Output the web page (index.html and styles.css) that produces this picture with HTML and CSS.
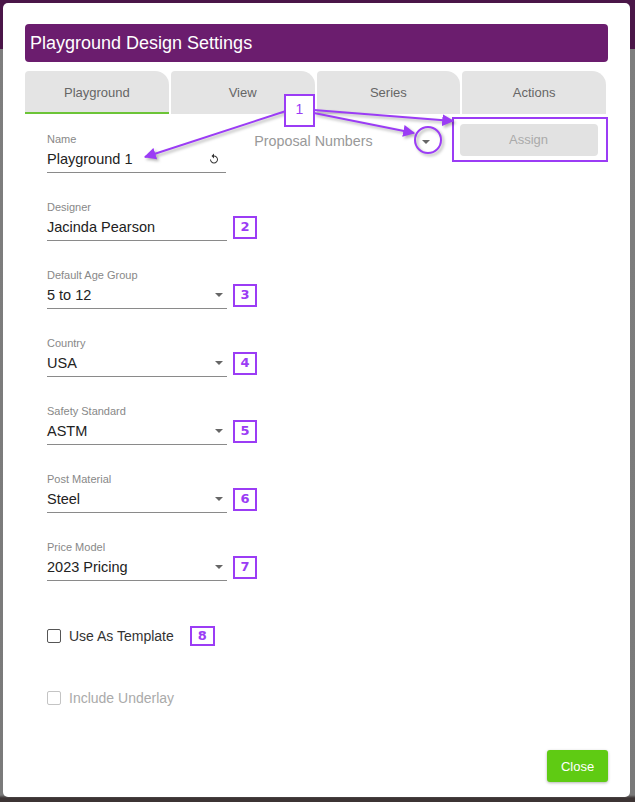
FILE: index.html
```html
<!DOCTYPE html>
<html>
<head>
<meta charset="utf-8">
<link rel="stylesheet" href="styles.css">
</head>
<body>
<div class="dialog">
  <div class="title">Playground Design Settings</div>
  <div class="tabs">
    <div class="tab active">Playground</div>
    <div class="tab">View</div>
    <div class="tab">Series</div>
    <div class="tab">Actions</div>
  </div>
  <div class="content">
    <div class="top-row">
      <div class="field">
        <div class="label">Name</div>
        <div class="input"><span>Playground 1</span>
          <svg class="reset" viewBox="0 0 24 24" width="12" height="12"><path d="M12 5V1L7 6l5 5V7c3.31 0 6 2.69 6 6s-2.69 6-6 6-6-2.69-6-6H4c0 4.42 3.58 8 8 8s8-3.58 8-8-3.58-8-8-8z" fill="#333"/></svg>
        </div>
      </div>
      <div class="proposal"><span>Proposal Numbers</span><i class="caret"></i></div>
      <div class="assign-box"><div class="assign">Assign</div></div>
    </div>
    <div class="row">
      <div class="field">
        <div class="label">Designer</div>
        <div class="input"><span>Jacinda Pearson</span></div>
      </div>
      <div class="num">2</div>
    </div>
    <div class="row">
      <div class="field">
        <div class="label">Default Age Group</div>
        <div class="input"><span>5 to 12</span><i class="caret"></i></div>
      </div>
      <div class="num">3</div>
    </div>
    <div class="row">
      <div class="field">
        <div class="label">Country</div>
        <div class="input"><span>USA</span><i class="caret"></i></div>
      </div>
      <div class="num">4</div>
    </div>
    <div class="row">
      <div class="field">
        <div class="label">Safety Standard</div>
        <div class="input"><span>ASTM</span><i class="caret"></i></div>
      </div>
      <div class="num">5</div>
    </div>
    <div class="row">
      <div class="field">
        <div class="label">Post Material</div>
        <div class="input"><span>Steel</span><i class="caret"></i></div>
      </div>
      <div class="num">6</div>
    </div>
    <div class="row">
      <div class="field">
        <div class="label">Price Model</div>
        <div class="input"><span>2023 Pricing</span><i class="caret"></i></div>
      </div>
      <div class="num">7</div>
    </div>
    <div class="checks">
      <div class="check-row">
        <span class="box"></span><span class="check-label">Use As Template</span>
        <div class="num num-check">8</div>
      </div>
      <div class="check-row disabled">
        <span class="box"></span><span class="check-label">Include Underlay</span>
      </div>
    </div>
  </div>
  <div class="footer"><button class="close">Close</button></div>
</div>
<svg class="arrows" width="635" height="802" viewBox="0 0 635 802">
  <defs>
    <marker id="ah" viewBox="0 0 10 10" refX="9" refY="5" markerWidth="6" markerHeight="6" markerUnits="strokeWidth" orient="auto">
      <path d="M0 0 L10 5 L0 10 z" fill="#9b3cf5"/>
    </marker>
  </defs>
  <line x1="286" y1="111" x2="145" y2="157" stroke="#9b3cf5" stroke-width="2" marker-end="url(#ah)"/>
  <line x1="314" y1="113" x2="414" y2="133" stroke="#9b3cf5" stroke-width="2" marker-end="url(#ah)"/>
  <line x1="314" y1="110" x2="453" y2="121" stroke="#9b3cf5" stroke-width="2" marker-end="url(#ah)"/>
  <circle cx="428" cy="140" r="13" fill="none" stroke="#9b3cf5" stroke-width="2"/>
</svg>
<div class="num num-one">1</div>
</body>
</html>
```
FILE: styles.css
```css
html, body {
  margin: 0;
  padding: 0;
}
body {
  width: 635px;
  height: 802px;
  overflow: hidden;
  position: relative;
  font-family: "Liberation Sans", Arial, sans-serif;
  background: linear-gradient(to bottom, #4a1648 0, #4a1648 49px, #7e7e7e 49px, #7a7a7a 795px, #3c3434 798px, #3c3434 802px);
}
.dialog {
  margin: 3px 0 0 3px;
  width: 627px;
  height: 794px;
  box-sizing: border-box;
  background: #fff;
  border-radius: 5px;
  padding: 21px 22px 15px 22px;
  display: flex;
  flex-direction: column;
}
.title {
  height: 38px;
  width: 583px;
  box-sizing: border-box;
  background: #6b1d6e;
  border-radius: 4px;
  color: #fff;
  font-size: 18px;
  line-height: 38px;
  padding-left: 5px;
}
.tabs {
  margin-top: 9px;
  width: 581px;
  display: flex;
  gap: 2px;
}
.tab {
  flex: 1;
  height: 43px;
  box-sizing: border-box;
  background: #e4e4e4;
  border-radius: 4px 14px 0 0;
  text-align: center;
  line-height: 43px;
  font-size: 13px;
  color: #666;
}
.tab.active {
  border-bottom: 2px solid #6cc437;
}
.content {
  padding: 18px 0 0 22px;
}
.top-row, .row {
  display: flex;
  align-items: flex-start;
}
.row {
  align-items: flex-end;
}
.field {
  width: 180px;
  margin-bottom: 27px;
}
.label {
  height: 14px;
  line-height: 14px;
  font-size: 11px;
  color: #888;
}
.input {
  height: 26px;
  box-sizing: content-box;
  border-bottom: 1px solid #8a8a8a;
  display: flex;
  align-items: center;
  justify-content: space-between;
  font-size: 14.5px;
  color: #222;
}
.input span {
  line-height: 20px;
}
.reset {
  margin-right: 6px;
}
.caret {
  display: block;
  width: 0;
  height: 0;
  border-left: 4px solid transparent;
  border-right: 4px solid transparent;
  border-top: 4px solid #666;
  margin-right: 4px;
}
.proposal {
  margin-left: 28px;
  width: 176px;
  height: 18px;
  line-height: 18px;
  font-size: 14.3px;
  color: #999;
  display: flex;
  align-items: center;
  justify-content: space-between;
}
.proposal .caret {
  margin-right: 0;
  margin-top: 1px;
}
.assign-box {
  margin-left: 22px;
  margin-top: -15px;
  width: 157px;
  height: 45px;
  box-sizing: border-box;
  border: 2px solid #9b3cf5;
  padding: 5px 0 0 6px;
}
.assign {
  width: 138px;
  height: 32px;
  background: #e2e2e2;
  border-radius: 4px;
  text-align: center;
  line-height: 32px;
  font-size: 13px;
  color: #aaa;
}
.num {
  width: 24px;
  height: 23px;
  box-sizing: border-box;
  border: 2px solid #9b3cf5;
  color: #9b3cf5;
  font-family: "DejaVu Sans", sans-serif;
  font-weight: bold;
  font-size: 13px;
  line-height: 18px;
  text-align: center;
  margin-left: 6px;
  margin-bottom: 29px;
  background: #fff;
}
.checks {
  margin-top: 18px;
  display: flex;
  flex-direction: column;
  gap: 42px;
}
.check-row {
  display: flex;
  align-items: center;
  height: 20px;
}
.box {
  width: 14px;
  height: 14px;
  box-sizing: border-box;
  border: 1.5px solid #555;
  border-radius: 2px;
}
.check-label {
  margin-left: 8px;
  font-size: 14px;
  color: #333;
}
.disabled .box {
  border-color: #c4c4c4;
}
.disabled .check-label {
  color: #aaa;
}
.num-check {
  width: 25px;
  height: 20px;
  line-height: 15px;
  margin: 0 0 0 16px;
}
.footer {
  margin-top: auto;
  display: flex;
  justify-content: flex-end;
}
.close {
  width: 61px;
  height: 32px;
  border: none;
  border-radius: 3px;
  background: #5fcb13;
  color: #fff;
  font-family: "Liberation Sans", Arial, sans-serif;
  font-size: 13px;
  padding: 0;
  box-shadow: 0 1px 3px rgba(0,0,0,0.3);
}
.arrows {
  position: absolute;
  left: 0;
  top: 0;
  pointer-events: none;
  filter: drop-shadow(2px 2px 1.5px rgba(0,0,0,0.3));
}
.num-one {
  position: absolute;
  left: 284px;
  top: 94px;
  width: 31px;
  height: 33px;
  margin: 0;
  line-height: 27px;
  font-weight: normal;
  font-family: "Liberation Sans", sans-serif;
  font-size: 14px;
}
```
